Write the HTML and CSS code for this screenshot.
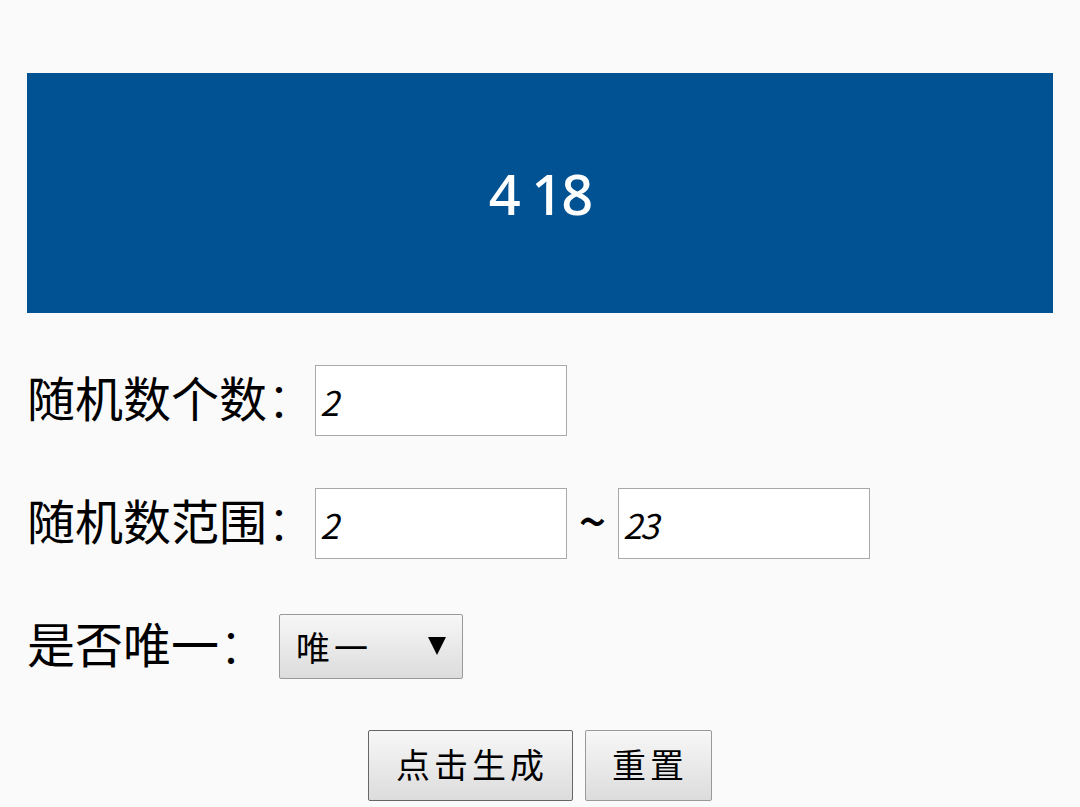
FILE: index.html
```html
<!DOCTYPE html>
<html lang="zh-CN">
<head>
  <meta charset="UTF-8">
  <title>随机数生成</title>
  <link rel="stylesheet" href="styles.css">
</head>
<body>

  <div class="result" id="result">4 18</div>

  <form id="randomForm">
    <div class="row">
      <label for="count">随机数个数<span class="colon">：</span></label>
      <input type="text" id="count" value="2">
    </div>

    <div class="row">
      <label for="min">随机数范围<span class="colon">：</span></label>
      <input type="text" id="min" value="2">
      <span class="tilde">~</span>
      <input type="text" id="max" value="23">
    </div>

    <div class="row row-select">
      <label for="unique">是否唯一<span class="colon">：</span></label>
      <div class="select-box">
        <select id="unique">
          <option selected>唯一</option>
        </select>
        <svg class="arrow" width="18" height="18" viewBox="0 0 18 18"><path d="M0 0H18L9 18Z"/></svg>
      </div>
    </div>

    <div class="buttons">
      <button type="button" class="generate">点击生成</button>
      <button type="reset">重置</button>
    </div>
  </form>

</body>
</html>
```

FILE: styles.css
```css
* {
  box-sizing: border-box;
}

body {
  margin: 0;
  padding: 73px 27px 0;
  height: 807px;
  overflow: hidden;
  background-color: #fafafa;
  color: #000;
  font-family: "Noto Sans CJK SC", sans-serif;
}

.result {
  height: 240px;
  line-height: 241px;
  margin-bottom: 52px;
  background-color: #005293;
  color: #fff;
  font-family: "Noto Sans", sans-serif;
  font-size: 56px;
  font-weight: 500;
  letter-spacing: -2px;
  text-align: center;
}

.row {
  display: flex;
  align-items: center;
  height: 71px;
  margin-bottom: 52px;
  font-size: 48px;
  line-height: 71px;
}

.row label {
  padding-bottom: 8px;
  white-space: nowrap;
}

.colon {
  font-weight: 300;
}

input {
  width: 252px;
  height: 71px;
  padding: 2px 6px 0 4px;
  border: 1px solid #a9a9a9;
  background-color: #fff;
  color: #000;
  font-family: "Noto Sans CJK SC", sans-serif;
  font-size: 34px;
  font-style: italic;
  font-weight: 400;
  letter-spacing: -2px;
}

.tilde {
  width: 51px;
  padding-bottom: 8px;
  font-weight: 500;
  text-align: center;
}

.row-select {
  height: 65px;
  margin-top: 55px;
  margin-bottom: 51px;
  line-height: 65px;
}

.select-box {
  position: relative;
  width: 184px;
  height: 65px;
  margin-left: 12px;
}

select,
button {
  border: 1px solid #999;
  border-radius: 2px;
  background: linear-gradient(#f7f7f7, #dcdcdc);
  color: #000;
  font-family: "Noto Sans CJK SC", sans-serif;
  font-size: 34px;
  font-weight: 400;
  letter-spacing: 4px;
}

select {
  display: block;
  appearance: none;
  width: 184px;
  height: 65px;
  padding: 0 16px;
}

.arrow {
  position: absolute;
  top: 23px;
  right: 17px;
  pointer-events: none;
}

.buttons {
  display: flex;
  justify-content: center;
  gap: 12px;
}

button {
  width: 127px;
  height: 71px;
  padding: 0 0 4px 3px;
  white-space: nowrap;
}

.generate {
  width: 205px;
  border-color: #666;
}
```
